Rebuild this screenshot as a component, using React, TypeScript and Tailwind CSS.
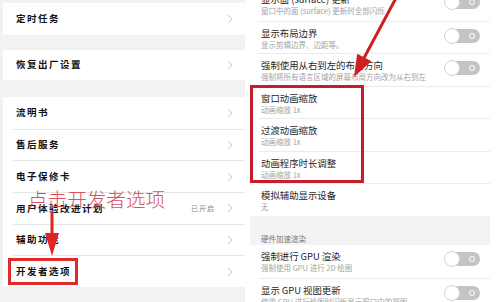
import React from "react";

const Chevron = () => (
  <svg width="6" height="10" viewBox="0 0 6 10" className="shrink-0">
    <polyline points="1,1 5,5 1,9" fill="none" stroke="#c6c6c6" strokeWidth="1" />
  </svg>
);

const LeftRow = ({
  label,
  first,
  extra,
  h,
  boxed,
}: {
  label: string;
  first?: boolean;
  extra?: string;
  h: string;
  boxed?: boolean;
}) => (
  <div className={`pl-[10px] ${h}`}>
    <div
      className={`relative h-full flex items-center pl-[3px] pr-[12px] ${
        first ? "" : "border-t border-[#e6e6e6]"
      }`}
    >
      <span className="flex-1 text-[9.5px] font-bold tracking-[1.5px] text-[#111] leading-none">
        {label}
      </span>
      {extra && (
        <span className="mr-[12px] text-[7px] tracking-[1px] text-[#888] leading-none">{extra}</span>
      )}
      <Chevron />
      {boxed && (
        <div className="absolute left-[-5px] top-[1.5px] w-[70px] h-[27px] border-[3px] border-[#e02a2a]" />
      )}
    </div>
  </div>
);

const Toggle = () => (
  <div className="relative w-[35px] h-[14px] rounded-full bg-[#c4c4c4] shrink-0 self-start mt-[7px]">
    <div className="absolute left-[-1px] top-[-1px] w-[16px] h-[16px] rounded-full bg-white border border-[#d6d6d6]" />
    <div className="absolute right-[5px] top-[4px] w-[6px] h-[6px] rounded-full border-[1.5px] border-white" />
  </div>
);

const RightRow = ({
  title,
  sub,
  toggle,
  first,
}: {
  title: string;
  sub: string;
  toggle?: boolean;
  first?: boolean;
}) => (
  <div className="ml-[13px] mr-[6px] h-[32.5px]">
    <div
      className={`h-full flex pl-[3px] pr-[10px] ${first ? "" : "border-t border-[#ececec]"}`}
    >
      <div className="flex-1 flex flex-col pt-[6px] whitespace-nowrap">
        <span className="text-[9.4px] leading-[11px] text-[#262626]">{title}</span>
        <span className="mt-[1px] text-[7.5px] leading-[9px] text-[#a3a3a3]">{sub}</span>
      </div>
      {toggle && <Toggle />}
    </div>
  </div>
);

export default function App() {
  return (
    <div className="relative w-[496px] h-[302px] flex overflow-hidden bg-white font-['Noto_Sans_CJK_SC','Noto_Sans',sans-serif]">
      {/* Left panel */}
      <div className="w-[245px] h-full shrink-0 bg-[#f2f2f2] flex flex-col pt-[3px]">
        <div className="ml-[3px] bg-white">
          <LeftRow label="定时任务" first h="h-[32px]" />
        </div>
        <div className="ml-[3px] mt-[15px] bg-white">
          <LeftRow label="恢复出厂设置" first h="h-[30px]" />
        </div>
        <div className="ml-[3px] mt-[17px] bg-white">
          <LeftRow label="流明书" first h="h-[31.67px]" />
          <LeftRow label="售后服务" h="h-[31.67px]" />
          <LeftRow label="电子保修卡" h="h-[31.67px]" />
          <LeftRow label="用户体验改进计划" extra="已开启" h="h-[31.67px]" />
          <LeftRow label="辅助功能" h="h-[31.67px]" />
          <LeftRow label="开发者选项" h="h-[31.67px]" boxed />
        </div>
      </div>

      {/* Right panel */}
      <div className="flex-1 h-full bg-white overflow-hidden">
        <div className="mt-[-12px] flex flex-col">
          <RightRow first title="显示面 (surface) 更新" sub="窗口中的面 (surface) 更新时全部闪烁" toggle />
          <RightRow title="显示布局边界" sub="显示剪辑边界、边距等。" toggle />
          <RightRow title="强制使用从右到左的布局方向" sub="强制将所有语言区域的屏幕布局方向改为从右到左" toggle />
          <div className="relative">
            <RightRow title="窗口动画缩放" sub="动画缩放 1x" />
            <RightRow title="过渡动画缩放" sub="动画缩放 1x" />
            <RightRow title="动画程序时长调整" sub="动画缩放 1x" />
            <div className="absolute left-[5px] top-[-0.5px] w-[114px] h-[98px] border-[3px] border-[#c41e2a]" />
          </div>
          <RightRow title="模拟辅助显示设备" sub="无" />
          <div className="ml-[5px] mr-[6px] h-[29.5px] bg-[#f3f3f3] flex items-end pl-[11px] pb-[2px]">
            <span className="text-[7.5px] leading-[9px] text-[#7a7a7a]">硬件加速渲染</span>
          </div>
          <RightRow first title="强制进行 GPU 渲染" sub="强制使用 GPU 进行 2D 绘图" toggle />
          <RightRow title="显示 GPU 视图更新" sub="使用 GPU 进行绘图时闪烁显示窗口中的视图" toggle />
        </div>
      </div>

      {/* Annotations */}
      <span className="absolute left-[28px] top-[187px] text-[19.6px] font-light leading-[24px] text-[#d9505a] whitespace-nowrap">
        点击开发者选项
      </span>
      <svg className="absolute left-0 top-0 pointer-events-none" width="496" height="302" viewBox="0 0 496 302">
        <line x1="52" y1="212" x2="52" y2="236" stroke="#e02525" strokeWidth="3" />
        <polygon points="45,233 59,233 52,256" fill="#e02525" />
        <line x1="396" y1="-2" x2="364" y2="58" stroke="#cc1f1f" strokeWidth="3" />
        <polygon points="371.4,61.2 357.2,53.8 354,77" fill="#cc1f1f" />
      </svg>
    </div>
  );
}
